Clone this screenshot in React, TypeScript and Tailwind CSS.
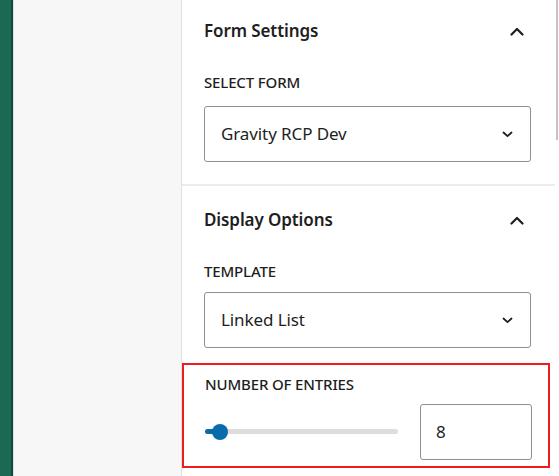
import React from "react";

const font = { fontFamily: '"Noto Sans", "Open Sans", sans-serif' };

function ChevronUp() {
  return (
    <svg width="14" height="9" viewBox="0 0 14 9" fill="none" className="block">
      <path d="M1.5 7.5 L7 2 L12.5 7.5" stroke="#1e1e1e" strokeWidth="2.2" strokeLinecap="round" strokeLinejoin="round" />
    </svg>
  );
}

function ChevronDown() {
  return (
    <svg width="11" height="7" viewBox="0 0 11 7" fill="none" className="block">
      <path d="M1.5 1.5 L5.5 5.2 L9.5 1.5" stroke="#1e1e1e" strokeWidth="1.8" strokeLinecap="round" strokeLinejoin="round" />
    </svg>
  );
}

function Select({ value }: { value: string }) {
  return (
    <div className="flex h-[56px] w-[327px] items-center justify-between rounded-[3px] border border-[#8f8f8f] pl-[16px] pr-[17px]">
      <span className="text-[17px] tracking-[-0.1px] text-[#1e1e1e]">{value}</span>
      <ChevronDown />
    </div>
  );
}

function Label({ children }: { children: React.ReactNode }) {
  return <div className="text-[15px] font-medium uppercase leading-none tracking-[-0.15px] text-[#1e1e1e]">{children}</div>;
}

export default function App() {
  return (
    <div style={font} className="flex h-[476px] w-[559px] overflow-hidden bg-[#f7f7f7]">
      <div className="flex h-full w-[14px] shrink-0">
        <div className="h-full w-[11px] bg-[#1b6955]" />
        <div className="h-full w-[2px] bg-[#0f4a3c]" />
        <div className="h-full w-[1px] bg-[#cfe3e6]" />
      </div>
      <div className="w-[167px] shrink-0" />
      <div className="flex h-full w-[374px] shrink-0 flex-col border-l border-[#e0e0e0] bg-white">
        <div className="flex flex-col border-b-2 border-[#ececec] pl-[22px] pr-[22px]">
          <div className="flex h-[62px] items-center justify-between pr-[9px]">
            <span className="text-[17px] font-semibold tracking-[-0.1px] text-[#1e1e1e]">Form Settings</span>
            <ChevronUp />
          </div>
          <div className="pt-[13px]">
            <Label>Select Form</Label>
          </div>
          <div className="pt-[16px] pb-[22px]">
            <Select value="Gravity RCP Dev" />
          </div>
        </div>
        <div className="flex flex-col pl-[22px] pr-[22px]">
          <div className="flex h-[66px] items-center justify-between pr-[9px] pt-[2px]">
            <span className="text-[17px] font-semibold tracking-[-0.1px] text-[#1e1e1e]">Display Options</span>
            <ChevronUp />
          </div>
          <div className="pt-[12px]">
            <Label>Template</Label>
          </div>
          <div className="pt-[13px]">
            <Select value="Linked List" />
          </div>
        </div>
        <div className="mt-[15px] h-[105px] w-[368px] border-2 border-[#ee1c1c] pl-[21px]">
          <div className="pt-[12px]">
            <Label>Number of Entries</Label>
          </div>
          <div className="flex items-center pt-[12px]">
            <div className="relative h-[16px] w-[193px]">
              <div className="absolute left-0 right-0 top-[5px] h-[5px] rounded-full bg-[#dddddd]" />
              <div className="absolute left-0 top-[5px] h-[5px] w-[16px] rounded-full bg-[#0a6bab]" />
              <div className="absolute left-[7px] top-0 h-[16px] w-[16px] rounded-full bg-[#0a6bab]" />
            </div>
            <div className="ml-[22px] flex h-[56px] w-[112px] items-center rounded-[3px] border border-[#8f8f8f] pl-[15px]">
              <span className="text-[17px] text-[#1e1e1e]">8</span>
            </div>
          </div>
        </div>
      </div>
      <div className="flex h-full w-[4px] shrink-0 bg-white">
        <div className="ml-[1px] h-[140px] w-[2px] bg-[#c4c4c4]" />
      </div>
    </div>
  );
}
